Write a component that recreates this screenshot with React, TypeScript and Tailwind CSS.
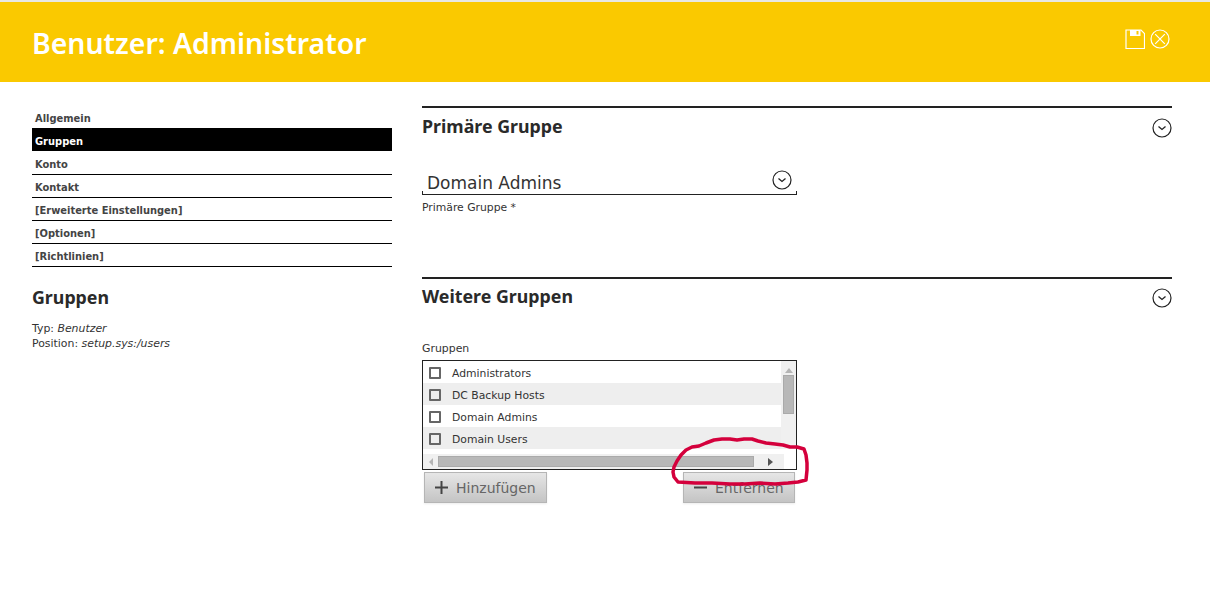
import React from "react";

const dv = "font-['DejaVu_Sans',sans-serif]";

function ChevronCircle({ className = "" }: { className?: string }) {
  return (
    <svg width="20" height="20" viewBox="0 0 20 20" fill="none" stroke="#222" className={className}>
      <circle cx="10" cy="10" r="9" strokeWidth="1.2" />
      <path d="M6.5 8.5 L10 11.5 L13.5 8.5" strokeWidth="1.3" />
    </svg>
  );
}

const nav = [
  { t: "Allgemein", c: "h-[22px] leading-[26px] text-[#444]" },
  { t: "Gruppen", c: "h-[23px] leading-[28px] bg-black text-white" },
  { t: "Konto", c: "h-[24px] leading-[28px] text-[#444] border-b border-black" },
  { t: "Kontakt", c: "h-[23px] leading-[26px] text-[#444] border-b border-black" },
  { t: "[Erweiterte Einstellungen]", c: "h-[23px] leading-[26px] text-[#444] border-b border-black" },
  { t: "[Optionen]", c: "h-[23px] leading-[26px] text-[#444] border-b border-black" },
  { t: "[Richtlinien]", c: "h-[23px] leading-[26px] text-[#444] border-b border-black" },
];
const rows = ["Administrators", "DC Backup Hosts", "Domain Admins", "Domain Users"];

function SectionHead({ title, titleTop, chevTop }: { title: string; titleTop: string; chevTop: string }) {
  return (
    <div className="border-t-2 border-[#222] flex justify-between h-[44px]">
      <h2 className={`font-['Noto_Sans',sans-serif] font-bold text-[17.8px] leading-[24px] text-[#2a2a2a] ${titleTop}`}>{title}</h2>
      <ChevronCircle className={chevTop} />
    </div>
  );
}

export default function App() {
  return (
    <div className={`relative w-[1210px] h-[592px] bg-white overflow-hidden ${dv}`}>
      <div className="h-[2px] bg-[#e8e8e2]" />
      <header className="h-[80px] bg-[#fac900] flex justify-between pl-[32px] pr-[40px]">
        <h1 className="font-['Noto_Sans',sans-serif] font-semibold text-[28.4px] leading-[40px] mt-[21px] text-white">Benutzer: Administrator</h1>
        <div className="flex gap-[5px] mt-[27px] h-[20px]">
          <svg width="20" height="20" viewBox="0 0 20 20" fill="none" stroke="#fff" strokeWidth="1.2">
            <path d="M1 1 H16 L19.5 4.5 V19.5 H1 Z" />
            <path d="M5 1 H15.5 V7 H5 Z" fill="#fff" stroke="none" />
            <path d="M11.5 2 H13.5 V5.5 H11.5 Z" fill="#fac900" stroke="none" />
          </svg>
          <svg width="20" height="20" viewBox="0 0 20 20" fill="none" stroke="#fff" strokeWidth="1.2">
            <circle cx="10" cy="10" r="9" />
            <path d="M5.2 5.2 L14.8 14.8 M14.8 5.2 L5.2 14.8" />
          </svg>
        </div>
      </header>

      <div className="flex pl-[32px] pt-[24px]">
        <aside className="w-[360px] mr-[30px]">
          <nav className="font-['DejaVu_Sans_Condensed','DejaVu_Sans',sans-serif] [font-stretch:condensed]">
            {nav.map((n) => (
              <div key={n.t} className={`pl-[3px] text-[11px] font-bold ${n.c}`}>
                {n.t}
              </div>
            ))}
          </nav>
          <h2 className="font-['Noto_Sans',sans-serif] font-bold text-[17.8px] leading-[24px] mt-[18px] text-[#2a2a2a]">Gruppen</h2>
          <p className="text-[10.9px] leading-[15px] mt-[12px] text-[#333]">
            Typ: <em>Benutzer</em>
            <br />
            Position: <em>setup.sys:/users</em>
          </p>
        </aside>

        <main className="w-[750px]">
          <SectionHead title="Primäre Gruppe" titleTop="mt-[6px]" chevTop="mt-[10px]" />
          <div className="w-[375px] mt-[19px] relative h-[26px] border-b border-[#222] text-[17px] leading-[22px] pl-[5px] pt-[3px] text-[#333]">
            Domain Admins
            <ChevronCircle className="absolute right-[5px] top-[1px]" />
            <span className="absolute left-0 bottom-0 w-px h-[3px] bg-[#222]" />
            <span className="absolute right-0 bottom-0 w-px h-[3px] bg-[#222]" />
          </div>
          <div className="text-[10.8px] leading-[14px] mt-[6px] text-[#333]">Primäre Gruppe *</div>

          <div className="mt-[62px]">
            <SectionHead title="Weitere Gruppen" titleTop="mt-[5px]" chevTop="mt-[9px]" />
          </div>
          <div className="text-[10.9px] leading-[14px] mt-[21px] text-[#333]">Gruppen</div>
          <div className="w-[375px] h-[110px] mt-[4px] border border-[#222] flex flex-col">
            <div className="flex h-[88px]">
              <div className="flex-1">
                {rows.map((r, i) => (
                  <div key={r} className={`h-[22px] flex items-center pl-[6px] text-[10.8px] text-[#333] ${i % 2 ? "bg-[#eeeeee]" : "bg-white"}`}>
                    <span className="w-[12px] h-[12px] mt-[2px] border-2 border-[#666] rounded-[1px] mr-[11px]" />
                    <span className="mt-[4px]">{r}</span>
                  </div>
                ))}
              </div>
              <div className="w-[15px] bg-[#f0f0f0] flex flex-col items-center pt-[7px]">
                <span className="w-0 h-0 border-x-[4px] border-x-transparent border-b-[5px] border-b-[#b5b5b5]" />
                <span className="w-[11px] h-[39px] mt-[2px] bg-[#b8b8b8] border border-[#aaa]" />
              </div>
            </div>
            <div className="h-[5px] bg-white" />
            <div className="flex items-center h-[15px] bg-[#f0f0f0]">
              <div className="w-[15px] flex justify-center">
                <span className="w-0 h-0 border-y-[4px] border-y-transparent border-r-[4px] border-r-[#b5b5b5]" />
              </div>
              <span className="w-[316px] h-[11px] bg-[#b8b8b8] border border-[#aaa]" />
              <div className="w-[28px] flex justify-center ml-[2px]">
                <span className="w-0 h-0 border-y-[4px] border-y-transparent border-l-[5px] border-l-[#555]" />
              </div>
              <div className="flex-1 self-stretch bg-white" />
            </div>
          </div>
          <div className="w-[375px] flex justify-between pl-[2px] pr-[2px] mt-[2px]">
            <Btn icon="M1 7.5 H14 M7.5 1 V14" label="Hinzufügen" w="w-[123px]" />
            <Btn icon="M1 7.5 H14" label="Entfernen" w="w-[112px]" />
          </div>
        </main>
      </div>

      <svg className="absolute left-0 top-0 pointer-events-none" width="1210" height="592" fill="none">
        <path
          d="M674 467 L677 461 L681 455 L686 450 L692 447 L699 446 L706 443 L714 440 L722 439 L730 439 L737 440 L744 439 L752 439 L758 441 L766 443 L775 444 L783 445 L790 447 L797 447 L804 449 L806 455 L807 463 L807 470 L806 480 L798 482 L788 483 L775 484 L760 483 L745 484 L730 484 L712 483 L695 483 L678 482 L674 477 L673 472 Z"
          stroke="#d4003c"
          strokeWidth="3.5"
          strokeLinejoin="round"
        />
      </svg>
    </div>
  );
}

function Btn({ icon, label, w }: { icon: string; label: string; w: string }) {
  return (
    <button className={`${w} h-[31px] border border-[#b5b5b5] bg-gradient-to-b from-[#e6e6e6] to-[#c4c4c4] flex items-center pl-[9px] text-[14px] text-[#666] shadow-[0_1px_2px_rgba(0,0,0,0.08)] ${dv}`}>
      <svg width="15" height="15" viewBox="0 0 15 15" stroke="#444" strokeWidth="2" fill="none" className="mr-[7px]">
        <path d={icon} />
      </svg>
      <span className="mt-[2px]">{label}</span>
    </button>
  );
}
